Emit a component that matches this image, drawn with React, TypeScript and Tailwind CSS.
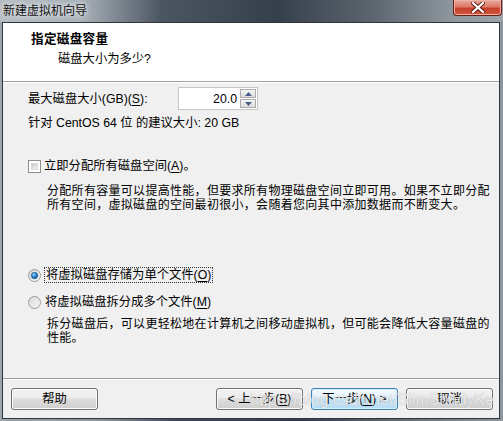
import React from "react";

const F = "font-['Liberation_Sans','Noto_Sans_CJK_SC',sans-serif]";

function U({ c }: { c: string }) {
  return <span className="underline underline-offset-[2px] decoration-[1px]">{c}</span>;
}

function Radio({ checked }: { checked?: boolean }) {
  return (
    <svg width="13" height="13" viewBox="0 0 13 13" className="shrink-0">
      <defs>
        <linearGradient id={checked ? "rg1" : "rg2"} x1="0" y1="0" x2="1" y2="1">
          <stop offset="0" stopColor="#d4d4d4" />
          <stop offset="1" stopColor="#fbfbfb" />
        </linearGradient>
        <radialGradient id="dot" cx="0.4" cy="0.35" r="0.7">
          <stop offset="0" stopColor="#9fd6ff" />
          <stop offset="0.5" stopColor="#2a8ad8" />
          <stop offset="1" stopColor="#0d4a8a" />
        </radialGradient>
      </defs>
      <circle cx="6.5" cy="6.5" r="6" fill={`url(#${checked ? "rg1" : "rg2"})`} stroke="#9a9a9a" strokeWidth="1" />
      <circle cx="6.5" cy="6.5" r="4.2" fill="none" stroke="#e6e6e6" strokeWidth="0.8" />
      {checked && <circle cx="6.5" cy="6.5" r="3.2" fill="url(#dot)" stroke="#1b4f85" strokeWidth="0.6" />}
    </svg>
  );
}

function Checkbox() {
  return (
    <div className="w-[13px] h-[13px] shrink-0 border border-[#8f8f8f] bg-white p-[2px]">
      <div className="w-full h-full bg-gradient-to-br from-[#c9c9c9] to-[#f4f4f4] border border-[#d8d8d8]" />
    </div>
  );
}

function Btn({ children, def }: { children: React.ReactNode; def?: boolean }) {
  return (
    <div
      className={
        "w-[87px] h-[22px] rounded-[3px] border flex items-center justify-center text-[12.3px] text-black " +
        (def
          ? "border-[#3c7fb1] bg-[linear-gradient(#f2f9fd_0%,#e5f3fb_45%,#c4e5f6_50%,#b6def6_100%)] shadow-[inset_0_0_0_1px_#d6efff]"
          : "border-[#707070] bg-[linear-gradient(#f2f2f2_0%,#ebebeb_45%,#dddddd_50%,#cfcfcf_100%)] shadow-[inset_0_0_0_1px_#fcfcfc]")
      }
    >
      {children}
    </div>
  );
}

export default function App() {
  return (
    <div
      className={`${F} relative w-[503px] h-[421px] overflow-hidden flex flex-col bg-[linear-gradient(to_right,#9ea6ad_0%,#8a939b_20%,#3f4955_35%,#333d49_60%,#5f6870_78%,#8e969d_100%)]`}
    >
      {/* title bar */}
      <div className="h-[22px] flex items-start justify-between shrink-0 bg-[linear-gradient(to_right,#b6bdc3_0%,#aab2b9_16%,#4c5662_32%,#36404c_55%,#5c656e_74%,#8f979e_90%,#9ca3a9_100%)]">
        <span className="pl-[3px] pt-[3px] text-[12px] leading-[16px] text-[#111] [text-shadow:0_0_4px_#e8ecef,0_0_6px_#e8ecef]">
          新建虚拟机向导
        </span>
        <div className="mr-[1px] w-[49px] h-[16px] rounded-b-[4px] border border-t-0 border-[#6a1f16] bg-[linear-gradient(#e9a99c_0%,#dc7866_45%,#c7402b_55%,#d0553c_100%)] flex items-center justify-center shadow-[inset_0_0_0_1px_#efb2a4]">
          <svg width="14" height="11" viewBox="0 0 14 11">
            <path d="M2 1 L12 10 M12 1 L2 10" stroke="#5a1c14" strokeWidth="4" strokeLinecap="square" />
            <path d="M2 1 L12 10 M12 1 L2 10" stroke="#ffffff" strokeWidth="2.2" strokeLinecap="square" />
          </svg>
        </div>
      </div>

      {/* client area */}
      <div className="flex-1 ml-[2px] mr-[3px] mb-[2px] border border-[#2e363e] flex flex-col bg-[#f0f0f0]">
        {/* header */}
        <div className="h-[58px] shrink-0 bg-white pt-[8px]">
          <div className="pl-[28px] text-[12.6px] leading-[16px] font-bold text-black tracking-[0.3px]">指定磁盘容量</div>
          <div className="pl-[55px] mt-[4px] text-[12.3px] leading-[16px] text-black">磁盘大小为多少?</div>
        </div>
        <div className="h-px bg-[#a0a0a0] shrink-0" />
        <div className="h-px bg-white shrink-0" />

        {/* body */}
        <div className="flex-1 text-[12.3px] text-black">
          <div className="mt-[4px] flex items-center h-[23px]">
            <span className="pl-[25px] w-[175px] leading-[16px]">
              最大磁盘大小(GB)(<U c="S" />):
            </span>
            <div className="w-[80px] h-[23px] border border-[#c5c5c5] bg-white flex items-center">
              <span className="flex-1 text-right pr-[3px] leading-[16px]">20.0</span>
              <div className="w-[17px] h-[21px] flex flex-col gap-px pr-px py-px">
                <div className="flex-1 border border-[#acacac] bg-[linear-gradient(#f4f4f4,#dcdcdc)] flex items-center justify-center">
                  <svg width="7" height="4" viewBox="0 0 7 4"><path d="M3.5 0 L7 4 L0 4 Z" fill="#4a5f87" /></svg>
                </div>
                <div className="flex-1 border border-[#acacac] bg-[linear-gradient(#f4f4f4,#dcdcdc)] flex items-center justify-center">
                  <svg width="7" height="4" viewBox="0 0 7 4"><path d="M0 0 L7 0 L3.5 4 Z" fill="#4a5f87" /></svg>
                </div>
              </div>
            </div>
          </div>

          <div className="mt-[5px] pl-[25px] leading-[16px]">针对 CentOS 64 位 的建议大小: 20 GB</div>

          <div className="mt-[27px] pl-[25px] flex items-center gap-[3px] h-[16px]">
            <Checkbox />
            <span className="leading-[16px]">
              立即分配所有磁盘空间(<U c="A" />)。
            </span>
          </div>

          <div className="mt-[10px] pl-[44px] pr-[4px] leading-[14px] text-[12px] tracking-[0.3px]">
            分配所有容量可以提高性能，但要求所有物理磁盘空间立即可用。如果不立即分配所有空间，虚拟磁盘的空间最初很小，会随着您向其中添加数据而不断变大。
          </div>

          <div className="mt-[55px] pl-[25px] flex items-center gap-[3px] h-[16px]">
            <Radio checked />
            <span className="leading-[14px] border border-dotted border-[#333] px-[1px]">
              将虚拟磁盘存储为单个文件(<U c="O" />)
            </span>
          </div>

          <div className="mt-[11px] pl-[25px] flex items-center gap-[4px] h-[16px]">
            <Radio />
            <span className="leading-[16px]">
              将虚拟磁盘拆分成多个文件(<U c="M" />)
            </span>
          </div>

          <div className="mt-[7px] pl-[44px] pr-[4px] leading-[14px] text-[12px] tracking-[0.3px]">
            拆分磁盘后，可以更轻松地在计算机之间移动虚拟机，但可能会降低大容量磁盘的性能。
          </div>
        </div>

        <div className="h-px bg-[#a0a0a0] shrink-0" />
        <div className="h-px bg-white shrink-0" />

        {/* footer */}
        <div className="h-[38px] shrink-0 pt-[8px] pl-[8px] pr-[6px] flex items-start">
          <Btn>帮助</Btn>
          <div className="flex-1" />
          <div className="flex gap-[8px]">
            <Btn>
              &lt; 上一步(<U c="B" />)
            </Btn>
            <Btn def>
              下一步(<U c="N" />) &gt;
            </Btn>
            <Btn>取消</Btn>
          </div>
        </div>
      </div>

      {/* watermark */}
      <div className="absolute left-[250px] top-[391px] text-[16px] leading-[18px] font-['Liberation_Sans',sans-serif] text-white/75 [text-shadow:0_0_1px_rgba(120,120,120,0.6)] whitespace-nowrap pointer-events-none">
        https://blog.csdn.net/SlimShadyKe
      </div>
    </div>
  );
}
